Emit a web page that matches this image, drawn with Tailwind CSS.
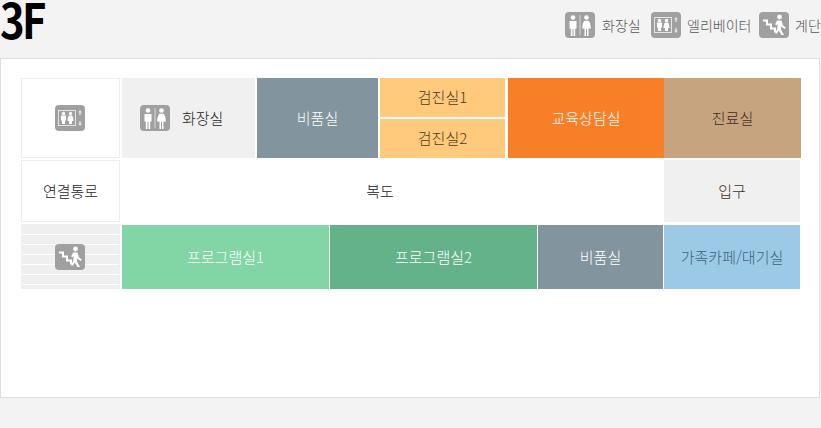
<!DOCTYPE html>
<html lang="ko">
<head>
    <meta charset="UTF-8">
    <meta name="viewport" content="width=device-width, initial-scale=1.0">
    <title>3F</title>
    <script src="https://cdn.jsdelivr.net/npm/@tailwindcss/browser@4"></script>
</head>
<body class="bg-[#f3f3f3] font-['Noto_Sans_CJK_KR',sans-serif] text-[15px] font-light text-[#222] overflow-hidden">
    <svg class="hidden">
        <symbol id="ico-wc" viewBox="0 0 30 26">
            <rect width="30" height="26" rx="4" fill="#a0a0a0"/>
            <rect x="14.500" y="3" width="1" height="20" fill="#d8d8d8"/>
            <circle cx="8" cy="5.500" r="2.300" fill="#fff"/>
            <path d="M4.500 9h7v7.500h-1.300V24H8.500v-7h-1v7H5.800v-7.500H4.500z" fill="#fff"/>
            <circle cx="21.500" cy="5.500" r="2.300" fill="#fff"/>
            <path d="M19.300 8.800h4.400c1.300 1.500 2.100 4.500 2.100 7.700h-2.300V24h-1.500v-7h-1v7h-1.500v-7.500h-2.300c0-3.200.8-6.200 2.100-7.700z" fill="#fff"/>
        </symbol>
        <symbol id="ico-ev" viewBox="0 0 30 26">
            <rect width="30" height="26" rx="4" fill="#a0a0a0"/>
            <rect x="3.500" y="5.500" width="17" height="15" fill="none" stroke="#e4e4e4"/>
            <circle cx="8.500" cy="8.500" r="1.700" fill="#fff"/>
            <path d="M6 10.500h5v5h-1v3.500H7v-3.500H6z" fill="#fff"/>
            <circle cx="15.500" cy="8.500" r="1.700" fill="#fff"/>
            <path d="M14 10.500h3c.9 1 1.500 3.200 1.500 5.500h-1.500v3h-3v-3h-1.500c0-2.300.6-4.500 1.500-5.500z" fill="#fff"/>
            <path d="M25 5l2 2.500h-1.300V10h-1.400V7.500H23zM25 21l2-2.500h-1.300V16h-1.400v2.500H23z" fill="#e4e4e4"/>
        </symbol>
        <symbol id="ico-st" viewBox="0 0 30 26">
            <rect width="30" height="26" rx="4" fill="#a0a0a0"/>
            <path d="M4 8.500h4v4h4v4h4v4" fill="none" stroke="#fff" stroke-width="2"/>
            <circle cx="20.500" cy="5" r="2.400" fill="#fff"/>
            <path d="M18 8.500h4.500l1.500 5 2.800 2-1.100 1.500-3.400-2.200-.4 2.700 3.100 5.500h-2.400l-3-4.500-1.300 3h-2l2-5.500.6-4-1.600 1.500-1.100-1.200z" fill="#fff"/>
        </symbol>
    </svg>

    <header class="h-[58px] flex justify-between overflow-hidden">
        <h1 class="font-['Noto_Sans_CJK_KR',sans-serif] font-bold text-[48px] leading-[36px] h-[40px] tracking-[-3px] text-black scale-x-[0.87] origin-left">3F</h1>
        <ul class="flex items-start pt-3 text-[14px] text-[#555] w-[256px] shrink-0 whitespace-nowrap overflow-hidden">
            <li class="flex items-center h-[26px] w-[86px]"><svg class="w-[30px] h-[26px] mr-[7px] shrink-0"><use href="#ico-wc"/></svg>화장실</li>
            <li class="flex items-center h-[26px] w-[108px]"><svg class="w-[30px] h-[26px] mr-[6px] shrink-0"><use href="#ico-ev"/></svg>엘리베이터</li>
            <li class="flex items-center h-[26px]"><svg class="w-[30px] h-[26px] mr-[6px] shrink-0"><use href="#ico-st"/></svg>계단</li>
        </ul>
    </header>

    <main class="w-[820px] h-[340px] bg-white border border-[#ddd] pt-[19px] pl-[20px]">
        <!-- row 1 -->
        <div class="flex h-[80px]">
            <div class="w-[99px] border border-[#eee] flex items-center justify-center pr-px"><svg class="w-[30px] h-[26px]"><use href="#ico-ev"/></svg></div>
            <div class="w-[133px] ml-[2px] bg-[#f0f0f0] flex items-center pl-[18px] gap-[12px]"><svg class="w-[30px] h-[26px]"><use href="#ico-wc"/></svg><span>화장실</span></div>
            <div class="w-[121px] ml-[2px] bg-[#82949d] text-white flex items-center justify-center">비품실</div>
            <div class="w-[125px] ml-[2px] flex flex-col gap-[2px]">
                <div class="h-[39px] bg-[#ffca7c] text-[#4a3a20] flex items-center justify-center">검진실1</div>
                <div class="h-[39px] bg-[#ffca7c] text-[#4a3a20] flex items-center justify-center">검진실2</div>
            </div>
            <div class="w-[156px] ml-[3px] bg-[#f77f27] text-white flex items-center justify-center">교육상담실</div>
            <div class="w-[137px] bg-[#c6a480] text-[#3f2f20] flex items-center justify-center">진료실</div>
        </div>
        <!-- row 2 -->
        <div class="flex h-[62px] mt-[2px]">
            <div class="w-[99px] border border-[#eee] flex items-center justify-center">연결통로</div>
            <div class="w-[542px] ml-[2px] flex items-center justify-center pr-[26px]">복도</div>
            <div class="w-[136px] bg-[#f0f0f0] text-[#3f2f20] flex items-center justify-center">입구</div>
        </div>
        <!-- row 3 -->
        <div class="flex h-[65px] mt-[2px]">
            <div class="w-[99px] border border-[#eee] flex items-center justify-center pr-px bg-[repeating-linear-gradient(to_bottom,#efefef_0,#efefef_9px,#ffffff_9px,#ffffff_10px)]"><svg class="w-[30px] h-[26px]"><use href="#ico-st"/></svg></div>
            <div class="w-[207px] ml-[2px] h-[64px] mt-px bg-[#82d6a6] text-white flex items-center justify-center">프로그램실1</div>
            <div class="w-[207px] ml-px h-[64px] mt-px bg-[#63b28a] text-white flex items-center justify-center">프로그램실2</div>
            <div class="w-[125px] ml-px h-[64px] mt-px bg-[#82949d] text-white flex items-center justify-center">비품실</div>
            <div class="w-[136px] ml-px h-[64px] mt-px bg-[#9ccae6] text-[#3f5f80] flex items-center justify-center">가족카페/대기실</div>
        </div>
    </main>
</body>
</html>
